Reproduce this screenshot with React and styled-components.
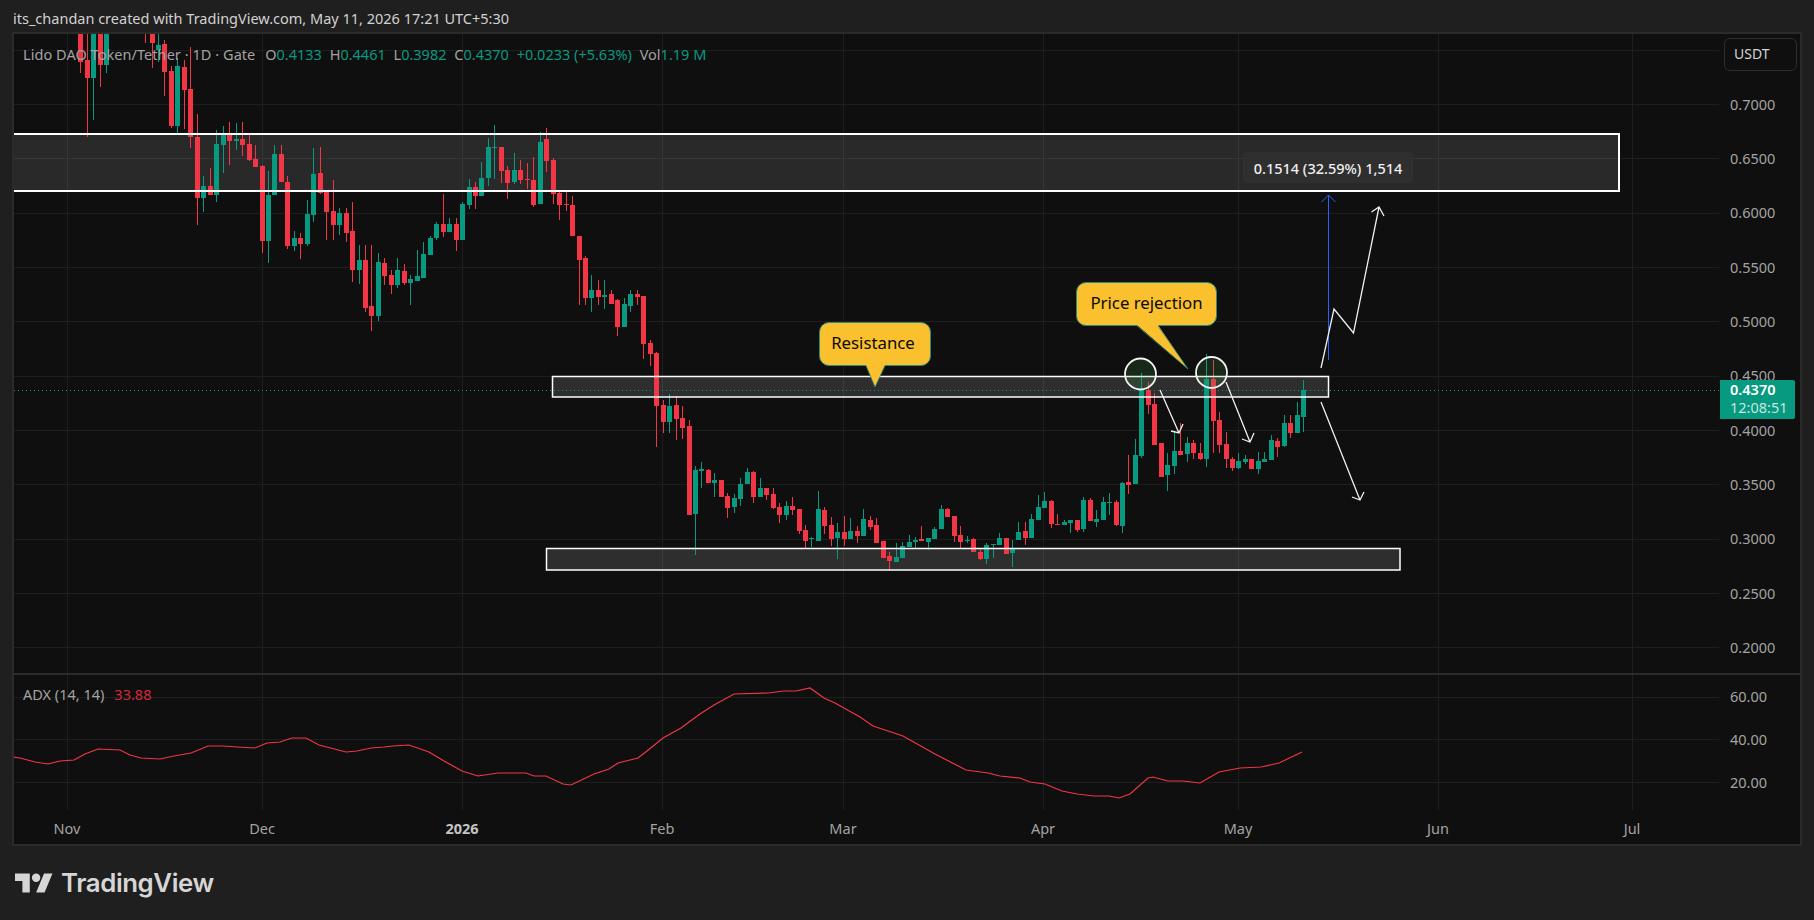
import React from 'react'
import styled, { createGlobalStyle } from 'styled-components'

const GREEN = '#089981'
const RED = '#f23645'
const FONT = '"Noto Sans", "Open Sans", sans-serif'

const GlobalStyle = createGlobalStyle`
  html, body { margin: 0; padding: 0; background: #1f1f1f; overflow: hidden; }
  body { font-family: ${FONT}; }
`

// x position of a day, counted from Nov 1
const dayX = (d) => Math.round(67.4 + d * 6.47)

// day index -> [wick top, body top, body bottom, wick bottom, colour], all in page pixels
const candles = {
  2: [20, 20, 62, 73, 'r'], 3: [20, 60, 78, 137, 'r'], 4: [20, 20, 78, 120, 'g'], 5: [20, 20, 65, 87, 'r'], 6: [20, 20, 65, 73, 'g'],
  12: [20, 20, 28, 43, 'r'], 13: [20, 20, 43, 68, 'r'], 14: [33, 45, 50, 62, 'g'], 15: [40, 44, 72, 96, 'r'], 16: [66, 71, 126, 128, 'r'],
  17: [58, 66, 126, 134, 'g'], 18: [60, 67, 90, 129, 'r'], 19: [47, 89, 137, 148, 'r'], 20: [114, 137, 198, 225, 'r'],
  21: [176, 186, 198, 212, 'g'], 22: [168, 186, 195, 195, 'r'], 23: [130, 144, 195, 202, 'g'], 24: [126, 134, 145, 173, 'g'],
  25: [122, 134, 141, 165, 'r'], 26: [123, 139, 141, 150, 'g'], 27: [122, 139, 145, 156, 'r'], 28: [135, 144, 160, 161, 'r'],
  29: [145, 159, 167, 167, 'r'], 30: [165, 166, 241, 253, 'r'], 31: [171, 195, 241, 263, 'g'], 32: [145, 154, 195, 195, 'g'],
  33: [145, 154, 182, 182, 'r'], 34: [176, 182, 246, 249, 'r'], 35: [231, 238, 246, 251, 'g'], 36: [233, 238, 244, 259, 'r'],
  37: [200, 214, 244, 246, 'g'], 38: [148, 174, 215, 222, 'g'], 39: [147, 173, 193, 194, 'r'], 40: [190, 191, 212, 240, 'r'],
  41: [180, 211, 225, 240, 'r'], 42: [208, 213, 225, 235, 'g'], 43: [208, 213, 233, 242, 'r'], 44: [202, 231, 270, 282, 'r'],
  45: [245, 260, 270, 284, 'g'], 46: [245, 260, 308, 312, 'r'], 47: [245, 306, 316, 331, 'r'], 48: [253, 262, 316, 321, 'g'],
  49: [258, 263, 276, 285, 'r'], 50: [270, 275, 285, 294, 'r'], 51: [258, 270, 285, 288, 'g'], 52: [264, 271, 283, 285, 'r'],
  53: [275, 279, 283, 305, 'g'], 54: [250, 276, 281, 281, 'g'], 55: [242, 254, 278, 278, 'g'], 56: [236, 238, 255, 255, 'g'],
  57: [222, 224, 238, 240, 'g'], 58: [194, 224, 232, 237, 'r'], 59: [218, 224, 232, 232, 'g'], 60: [218, 224, 240, 251, 'r'],
  61: [202, 204, 240, 240, 'g'], 62: [179, 187, 205, 209, 'g'], 63: [182, 187, 196, 209, 'r'], 64: [162, 178, 196, 196, 'g'],
  65: [138, 147, 178, 186, 'g'], 66: [125, 147, 148, 179, 'g'], 67: [147, 147, 171, 183, 'r'], 68: [166, 170, 183, 199, 'r'],
  69: [153, 170, 182, 184, 'g'], 70: [160, 170, 180, 184, 'r'], 71: [163, 179, 180, 189, 'r'], 72: [157, 180, 205, 207, 'r'],
  73: [132, 142, 204, 204, 'g'], 74: [128, 139, 161, 172, 'r'], 75: [158, 160, 194, 204, 'r'], 76: [190, 193, 205, 220, 'r'],
  77: [192, 204, 205, 211, 'r'], 78: [196, 205, 236, 236, 'r'], 79: [236, 236, 260, 305, 'r'], 80: [256, 258, 298, 305, 'r'],
  81: [275, 290, 298, 312, 'g'], 82: [280, 290, 297, 305, 'r'], 83: [280, 295, 297, 309, 'g'], 84: [290, 294, 304, 304, 'r'],
  85: [299, 300, 327, 336, 'r'], 86: [298, 304, 327, 327, 'g'], 87: [290, 294, 306, 312, 'g'], 88: [290, 294, 297, 305, 'r'],
  89: [296, 296, 344, 359, 'r'], 90: [340, 343, 354, 366, 'r'], 91: [352, 353, 406, 447, 'r'], 92: [400, 405, 422, 433, 'r'],
  93: [394, 406, 422, 433, 'g'], 94: [396, 405, 419, 440, 'r'], 95: [406, 418, 428, 439, 'r'], 96: [420, 426, 515, 515, 'r'],
  97: [466, 470, 514, 555, 'g'], 98: [462, 469, 471, 488, 'g'], 99: [469, 470, 483, 483, 'r'], 100: [473, 480, 483, 497, 'g'],
  101: [480, 480, 497, 497, 'r'], 102: [493, 496, 508, 518, 'r'], 103: [494, 498, 507, 513, 'g'], 104: [478, 484, 499, 506, 'g'],
  105: [468, 472, 484, 484, 'g'], 106: [471, 472, 497, 503, 'r'], 107: [478, 488, 497, 497, 'g'], 108: [488, 488, 495, 500, 'r'],
  109: [488, 494, 508, 509, 'r'], 110: [503, 507, 515, 523, 'r'], 111: [501, 506, 515, 520, 'g'], 112: [497, 506, 510, 515, 'r'],
  113: [509, 509, 531, 534, 'r'], 114: [525, 530, 541, 548, 'r'], 115: [537, 538, 539, 547, 'g'], 116: [491, 509, 541, 541, 'g'],
  117: [507, 510, 526, 534, 'r'], 118: [517, 525, 539, 546, 'r'], 119: [523, 532, 538, 559, 'g'], 120: [516, 532, 539, 546, 'r'],
  121: [518, 531, 539, 539, 'g'], 122: [526, 531, 536, 543, 'r'], 123: [509, 519, 536, 536, 'g'], 124: [516, 520, 527, 530, 'r'],
  125: [518, 525, 543, 543, 'r'], 126: [541, 541, 558, 558, 'r'], 127: [552, 556, 561, 571, 'r'], 128: [543, 557, 562, 562, 'g'],
  129: [542, 546, 558, 558, 'g'], 130: [535, 542, 547, 547, 'g'], 131: [537, 540, 542, 549, 'g'], 132: [526, 539, 541, 541, 'r'],
  133: [538, 538, 542, 550, 'g'], 134: [527, 529, 539, 539, 'g'], 135: [505, 509, 529, 529, 'g'], 136: [508, 509, 517, 517, 'r'],
  137: [516, 516, 536, 542, 'r'], 138: [526, 535, 542, 548, 'r'], 139: [536, 540, 541, 543, 'g'], 140: [538, 539, 552, 552, 'r'],
  141: [549, 552, 559, 560, 'r'], 142: [543, 545, 559, 564, 'g'], 143: [544, 544, 545, 558, 'g'], 144: [533, 538, 545, 545, 'g'],
  145: [538, 538, 554, 554, 'r'], 146: [540, 549, 553, 567, 'g'], 147: [522, 532, 540, 540, 'g'], 148: [522, 531, 538, 545, 'r'],
  149: [514, 519, 538, 538, 'g'], 150: [495, 507, 520, 520, 'g'], 151: [492, 501, 508, 508, 'g'], 152: [500, 501, 524, 528, 'r'],
  153: [514, 524, 525, 525, 'r'], 154: [520, 522, 525, 525, 'g'], 155: [520, 520, 523, 533, 'g'], 156: [520, 520, 530, 532, 'r'],
  157: [497, 500, 529, 532, 'g'], 158: [498, 500, 521, 521, 'r'], 159: [510, 519, 522, 527, 'g'], 160: [497, 502, 520, 520, 'g'],
  161: [493, 502, 503, 515, 'g'], 162: [500, 502, 525, 526, 'r'], 163: [482, 483, 526, 533, 'g'], 164: [455, 482, 485, 494, 'r'],
  165: [439, 455, 484, 484, 'g'], 166: [373, 390, 456, 458, 'g'], 167: [382, 390, 405, 414, 'r'], 168: [393, 404, 445, 445, 'r'],
  169: [443, 443, 477, 477, 'r'], 170: [453, 465, 475, 491, 'g'], 171: [431, 451, 466, 474, 'g'], 172: [423, 451, 455, 455, 'r'],
  173: [437, 443, 454, 462, 'g'], 174: [440, 443, 453, 459, 'r'], 175: [443, 453, 459, 460, 'r'], 176: [354, 379, 459, 467, 'g'],
  177: [360, 379, 421, 453, 'r'], 178: [412, 420, 445, 453, 'r'], 179: [432, 444, 459, 468, 'r'], 180: [457, 459, 468, 471, 'r'],
  181: [453, 461, 468, 469, 'g'], 182: [455, 459, 462, 464, 'g'], 183: [459, 459, 469, 469, 'r'], 184: [452, 461, 469, 474, 'g'],
  185: [452, 459, 462, 462, 'g'], 186: [435, 440, 460, 460, 'g'], 187: [438, 441, 447, 457, 'r'], 188: [415, 423, 446, 447, 'g'],
  189: [415, 423, 433, 438, 'r'], 190: [402, 415, 433, 433, 'g'], 191: [380, 390, 417, 432, 'g'],
}

const adxPoints = `13,757 20,758 35,762 48,764 60,761 74,760 85,754 98,749 120,750 130,755 141,758 160,759 174,756 191,753 208,746 223,746 237,747 255,748 267,743 280,742 292,738 306,738 319,745 346,752 357,751 371,748 384,747 393,746 409,745 429,752 444,761 462,771 478,776 498,773 526,773 534,776 546,776 563,784 571,785 594,774 609,769 618,763 638,758 647,751 663,738 681,728 700,714 714,705 734,694 768,693 784,691 796,691 810,688 824,698 835,703 860,717 873,726 903,736 935,754 966,770 988,773 1000,776 1020,778 1030,782 1045,784 1062,791 1077,794 1094,796 1109,796 1119,798 1130,794 1148,778 1153,777 1168,781 1183,781 1200,783 1219,772 1240,768 1261,767 1279,763 1302,752`

const priceLines = [50, 104, 158, 213, 267, 321, 376, 430, 484, 539, 593, 647]
const monthLines = [67, 262, 462, 662, 843, 1043, 1238, 1438, 1632]
const adxLines = [697, 739, 782]
const prices = ['0.7000', '0.6500', '0.6000', '0.5500', '0.5000', '0.4500', '0.4000', '0.3500', '0.3000', '0.2500', '0.2000']
const ticks = [
  { label: 'Nov', x: 67 }, { label: 'Dec', x: 262 }, { label: '2026', x: 462, strong: true }, { label: 'Feb', x: 662 },
  { label: 'Mar', x: 843 }, { label: 'Apr', x: 1043 }, { label: 'May', x: 1238 }, { label: 'Jun', x: 1438 }, { label: 'Jul', x: 1632 },
]

const Page = styled.div`
  width: 1814px;
  height: 920px;
  display: flex;
  flex-direction: column;
  background: #1f1f1f;
`
const Header = styled.div`
  height: 32px;
  padding: 8px 0 0 13px;
  box-sizing: border-box;
  font-size: 14.5px;
  line-height: 20px;
  color: #d2d2d2;
  white-space: nowrap;
`
const Panel = styled.div`
  width: 1790px;
  height: 814px;
  margin-left: 12px;
  box-sizing: border-box;
  border: 2px solid #2b2b2b;
  background: #0f0f0f;
  display: flex;
  flex-direction: column;
`
const Pane = styled.div`
  position: relative;
  height: ${(p) => p.$height}px;
  display: flex;
`
const PlotSvg = styled.svg`
  display: block;
  width: 1705px;
  height: 100%;
  flex: none;
`
const Divider = styled.div`
  height: 2px;
  background: #2b2b2b;
`
const Axis = styled.div`
  flex: 1;
  padding-left: 11px;
  font-size: 14.5px;
  color: #a3a3a3;
`
const UnitButton = styled.div`
  width: 73px;
  height: 33px;
  margin: 4px 0 5.5px -6px;
  padding-left: 9px;
  box-sizing: border-box;
  border: 1.5px solid #2b2e30;
  border-radius: 6px;
  font-size: 14px;
  line-height: 30px;
  color: #d2d2d2;
`
const AxisRow = styled.div`
  height: ${(p) => p.$height}px;
  line-height: ${(p) => p.$height}px;
`
const PriceTag = styled.div`
  position: absolute;
  left: 1706px;
  top: 346px;
  width: 75px;
  height: 39px;
  padding-left: 10px;
  box-sizing: border-box;
  background: ${GREEN};
  border-radius: 0 2px 2px 0;
  font-size: 14.5px;
  line-height: 18px;
  color: #c3e8e0;
`
const TagPrice = styled.div`
  color: #fff;
  font-weight: 600;
`
const Legend = styled.div`
  position: absolute;
  left: 9px;
  top: ${(p) => p.$top}px;
  display: flex;
  gap: ${(p) => p.$gap}px;
  font-size: 14.5px;
  line-height: 20px;
  color: #a3a3a3;
  white-space: nowrap;
`
const Title = styled.span`
  margin-right: 2px;
  letter-spacing: 0.05px;
`
const Value = styled.span`
  color: ${(p) => p.$color || GREEN};
`
const Bubble = styled.div`
  position: absolute;
  left: ${(p) => p.$x - 14}px;
  top: ${(p) => p.$y - 34}px;
  width: ${(p) => p.$w}px;
  height: ${(p) => p.$h}px;
  box-sizing: border-box;
  display: flex;
  align-items: center;
  justify-content: center;
  padding: 0 ${(p) => p.$nudge || 0}px 4px 0;
  background: #fbc02d;
  border: 1px solid #2b8a80;
  border-radius: 10px;
  font-size: 16.8px;
  color: #0a0a0a;
`
const BubbleLabel = styled.span`
  position: relative;
`
const Pointer = styled.svg`
  position: absolute;
  left: -1px;
  top: -1px;
  width: 1px;
  height: 1px;
  overflow: visible;
`
const Measure = styled.div`
  position: absolute;
  left: 1229px;
  top: 118px;
  width: 170px;
  height: 31px;
  display: flex;
  align-items: center;
  justify-content: center;
  background: #2f2f2f;
  border-radius: 4px;
  font-size: 14.5px;
  font-weight: 500;
  color: #f0f0f0;
  white-space: nowrap;
`
const TimeAxis = styled.div`
  height: 34px;
  display: flex;
  font-size: 14.5px;
  line-height: 36px;
  color: #a3a3a3;
`
const Tick = styled.div`
  width: 0;
  display: flex;
  justify-content: center;
  font-weight: ${(p) => (p.$strong ? 700 : 400)};
  color: ${(p) => (p.$strong ? '#c4c4c4' : '#a3a3a3')};
`
const Footer = styled.div`
  flex: 1;
  display: flex;
  align-items: center;
  gap: 8px;
  padding: 0 0 1px 15px;
  box-sizing: border-box;
  color: #d6d6d6;
`
const Wordmark = styled.div`
  font-family: Inter, ${FONT};
  font-size: 25.8px;
  font-weight: 600;
  letter-spacing: -0.4px;
  line-height: 30px;
`

const GridLines = ({ horizontal }) => (
  <g stroke="#1e1e1e" strokeWidth="1" shapeRendering="crispEdges">
    {horizontal.map((y) => <line key={y} x1="14" x2="1719" y1={y + 0.5} y2={y + 0.5} />)}
    {monthLines.map((x) => <line key={x} x1={x + 0.5} x2={x + 0.5} y1="0" y2="900" />)}
  </g>
)

const Candles = () => (
  <g shapeRendering="crispEdges">
    {Object.entries(candles).map(([d, [wt, bt, bb, wb, c]]) => {
      const x = dayX(Number(d))
      const fill = c === 'g' ? GREEN : RED
      return (
        <g key={d} fill={fill}>
          <rect x={x} y={wt} width="1" height={wb - wt} />
          <rect x={x - 2} y={bt} width="5" height={Math.max(bb - bt, 1)} />
        </g>
      )
    })}
  </g>
)

const Zone = ({ x, y, w, h, alpha }) => <rect x={x} y={y} width={w} height={h} fill={`rgba(255,255,255,${alpha})`} />
const ZoneEdge = ({ x, y, w, h, weight }) => <rect x={x} y={y} width={w} height={h} fill="none" stroke="#fff" strokeWidth={weight} />

const MainPlot = () => (
  <PlotSvg viewBox="14 34 1705 639">
    <GridLines horizontal={priceLines} />
    <Zone x={13} y={134} w={1606} h={57} alpha={0.11} />
    <Zone x={552} y={376} w={776} h={21} alpha={0.13} />
    <Zone x={546} y={548} w={854} h={22} alpha={0.13} />
    <Candles />
    <ZoneEdge x={13} y={134} w={1606} h={57} weight={2} />
    <ZoneEdge x={552.5} y={376.5} w={776} h={20.5} weight={1.5} />
    <ZoneEdge x={546.5} y={548.5} w={853.5} h={21.5} weight={1.5} />
    <line x1="14" x2="1719" y1="390.5" y2="390.5" stroke={GREEN} strokeWidth="1" strokeDasharray="1 3" />
    <circle cx="1140.5" cy="374" r="15.5" fill="rgba(76,175,80,0.16)" stroke="#f4f4f4" strokeWidth="1.8" />
    <circle cx="1211.5" cy="372.5" r="15.5" fill="rgba(76,175,80,0.16)" stroke="#f4f4f4" strokeWidth="1.8" />
    <g fill="none" stroke="#2962ff" strokeWidth="1">
      <path d="M1328.5 360V195" />
      <path d="M1321.5 202L1328.5 195L1335.5 202" />
    </g>
    <g fill="none" stroke="#f0f0f0" strokeWidth="1.3">
      <path d="M1160 390L1179 433M1171 431L1179 433L1183 424" />
      <path d="M1226 382L1250 442M1242 439L1250 442L1254 433" />
      <path d="M1321 402L1360 500M1352 497L1360 500L1364 492" />
      <path d="M1321 368L1334 309L1353.5 333L1379 207M1371.5 212L1379 207L1384 216" />
    </g>
  </PlotSvg>
)

const AdxPlot = () => (
  <PlotSvg viewBox="14 675 1705 135">
    <GridLines horizontal={adxLines} />
    <polyline points={adxPoints} fill="none" stroke={RED} strokeWidth="1.2" />
  </PlotSvg>
)

const Logo = () => (
  <svg width="38" height="20" viewBox="0 4 36 18" fill="currentColor">
    <path d="M14 22H7V11H0V4h14v18zM28 22h-8l7.5-18h8L28 22z" />
    <circle cx="20" cy="8" r="4" />
  </svg>
)

const App = () => (
  <Page>
    <GlobalStyle />
    <Header>its_chandan created with TradingView.com, May 11, 2026 17:21 UTC+5:30</Header>
    <Panel>
      <Pane $height={639}>
        <MainPlot />
        <Axis>
          <UnitButton>USDT</UnitButton>
          {prices.map((p) => <AxisRow key={p} $height={54.35}>{p}</AxisRow>)}
        </Axis>
        <Legend $gap={7.8} $top={10}>
          <Title>Lido DAO Token/Tether · 1D · Gate</Title>
          <span>O<Value>0.4133</Value></span>
          <span>H<Value>0.4461</Value></span>
          <span>L<Value>0.3982</Value></span>
          <span>C<Value>0.4370</Value></span>
          <Value>+0.0233 (+5.63%)</Value>
          <span>Vol<Value>1.19 M</Value></span>
        </Legend>
        <Bubble $x={819} $y={322} $w={112} $h={44} $nudge={4}>
          <Pointer>
            <path d="M47 43L56 65L66 43Z" fill="#fbc02d" />
            <path d="M47 44L56 65L66 44" fill="none" stroke="#2b8a80" strokeWidth="0.8" />
          </Pointer>
          <BubbleLabel>Resistance</BubbleLabel>
        </Bubble>
        <Bubble $x={1076} $y={282} $w={141} $h={44}>
          <Pointer>
            <path d="M61 43L112 87L82 43Z" fill="#fbc02d" />
            <path d="M61 44L112 87L82 44" fill="none" stroke="#2b8a80" strokeWidth="0.8" />
          </Pointer>
          <BubbleLabel>Price rejection</BubbleLabel>
        </Bubble>
        <Measure>0.1514 (32.59%) 1,514</Measure>
        <PriceTag>
          <TagPrice>0.4370</TagPrice>
          12:08:51
        </PriceTag>
      </Pane>
      <Divider />
      <Pane $height={135}>
        <AdxPlot />
        <Axis>
          {['60.00', '40.00', '20.00'].map((v) => <AxisRow key={v} $height={42.8}>{v}</AxisRow>)}
        </Axis>
        <Legend $gap={10} $top={9}>
          <span>ADX (14, 14)</span>
          <Value $color="#d6283c">33.88</Value>
        </Legend>
      </Pane>
      <TimeAxis>
        {ticks.map((t, i) => (
          <Tick key={t.label} $strong={t.strong} style={{ marginLeft: t.x - (i ? ticks[i - 1].x : 14) }}>{t.label}</Tick>
        ))}
      </TimeAxis>
    </Panel>
    <Footer>
      <Logo />
      <Wordmark>TradingView</Wordmark>
    </Footer>
  </Page>
)

export default App
